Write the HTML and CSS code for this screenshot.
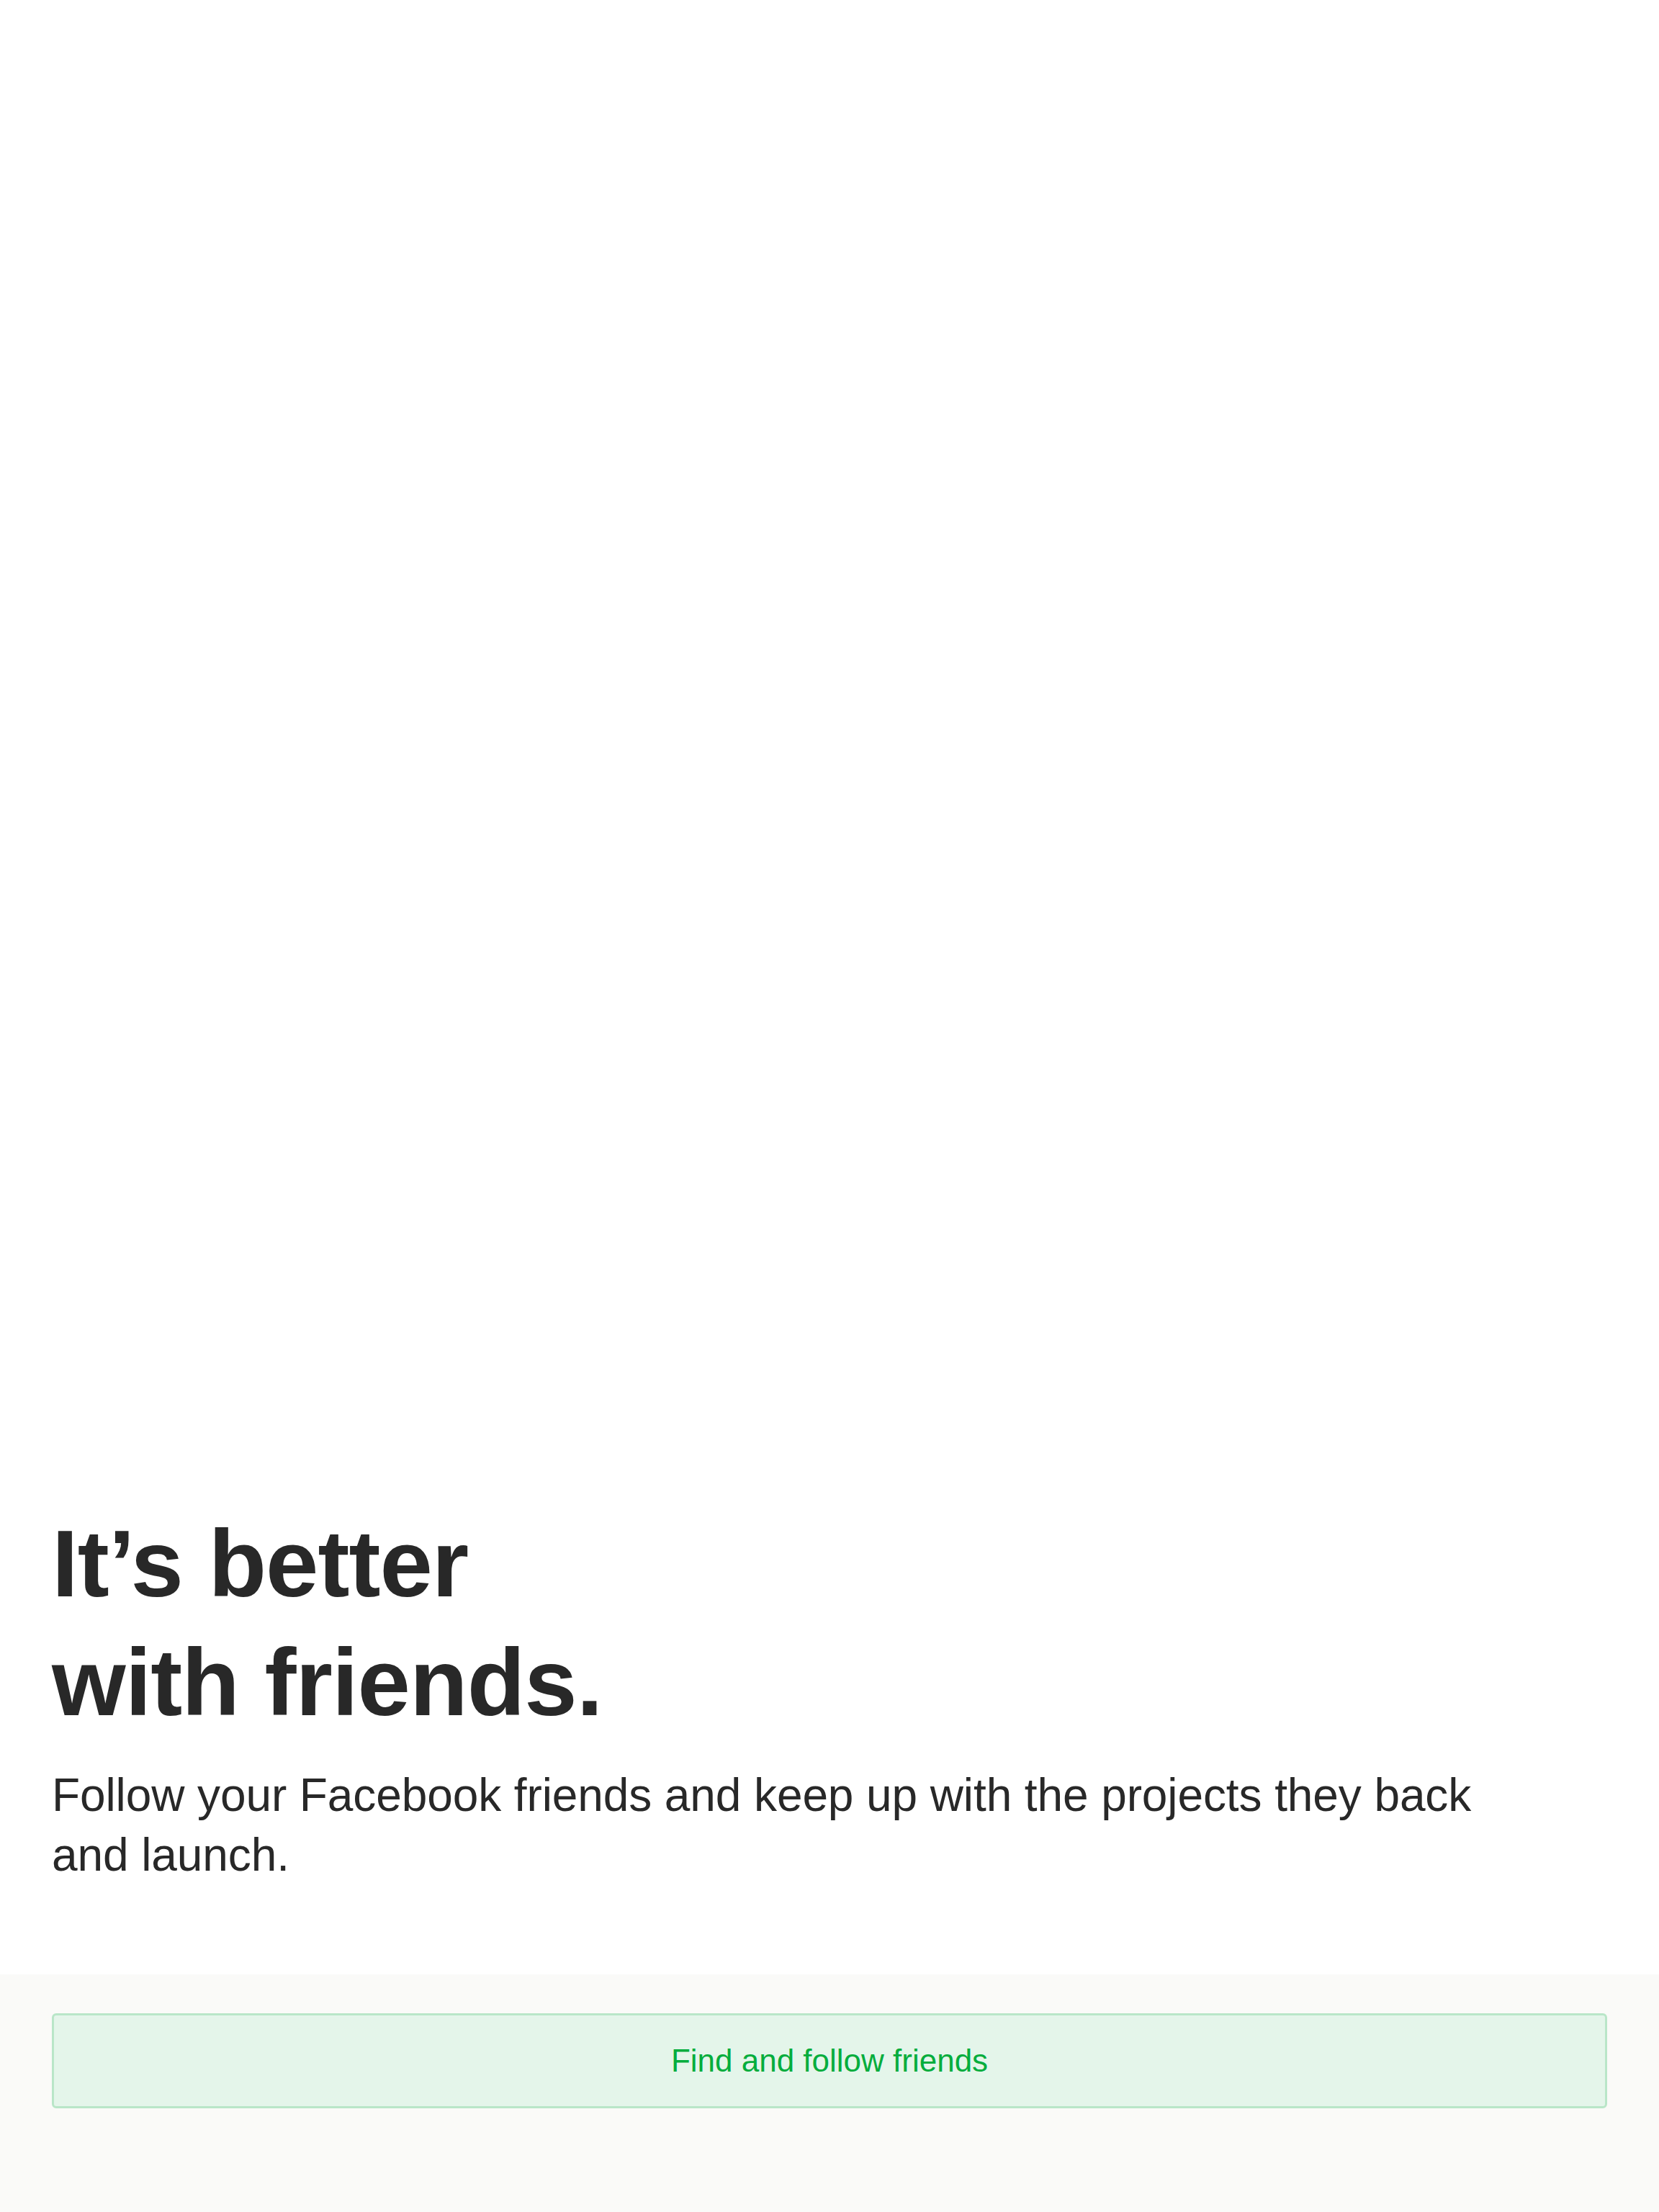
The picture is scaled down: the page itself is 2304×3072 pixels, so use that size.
FILE: index.html
```html
<!DOCTYPE html>
<html lang="en">
<head>
<meta charset="utf-8">
<title>It’s better with friends</title>
<link rel="stylesheet" href="styles.css">
</head>
<body>
<div class="page">
  <main class="intro">
    <h1 class="title">It’s better<br>with friends.</h1>
    <p class="lead">Follow your Facebook friends and keep up with the projects they back and launch.</p>
  </main>
  <footer class="actions">
    <button class="cta" type="button">Find and follow friends</button>
  </footer>
</div>
</body>
</html>
```

FILE: styles.css
```css
html, body {
  margin: 0;
  padding: 0;
  background: #ffffff;
}

body {
  font-family: "Liberation Sans", Arial, sans-serif;
  color: #282828;
}

.page {
  min-height: 3072px;
  display: flex;
  flex-direction: column;
}

.intro {
  flex: 1;
  display: flex;
  flex-direction: column;
  justify-content: flex-end;
  padding: 0 72px 124px;
  background: #ffffff;
}

.title {
  margin: 0;
  font-size: 132px;
  line-height: 165px;
  font-weight: 700;
  letter-spacing: -1px;
  color: #282828;
}

.lead {
  margin: 33px 0 0;
  max-width: 2060px;
  font-size: 64px;
  line-height: 83px;
  font-weight: 400;
  letter-spacing: -0.1px;
  color: #282828;
}

.actions {
  height: 330px;
  box-sizing: border-box;
  padding: 54px 72px 0;
  background: #fafaf8;
}

.cta {
  display: flex;
  align-items: center;
  justify-content: center;
  width: 100%;
  height: 132px;
  box-sizing: border-box;
  margin: 0;
  padding: 0;
  border: 3px solid #b9e6c8;
  border-radius: 6px;
  background: #e4f5ea;
  color: #04ad3d;
  font-family: "Liberation Sans", Arial, sans-serif;
  font-size: 44px;
  line-height: normal;
  font-weight: 400;
  cursor: pointer;
}
```
